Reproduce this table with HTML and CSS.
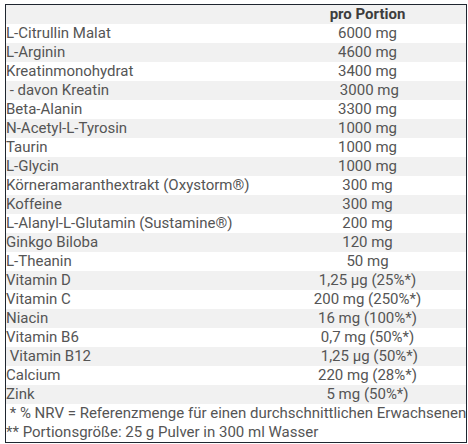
FILE: index.html
```html
<!DOCTYPE html>
<html lang="de">
<head>
<meta charset="utf-8">
<link rel="stylesheet" href="styles.css">
</head>
<body>
<div class="box">
<table class="nt">
<thead>
<tr><th class="name"></th><th class="val">pro Portion</th></tr>
</thead>
<tbody>
<tr><td class="name">L-Citrullin Malat</td><td class="val">6000 mg</td></tr>
<tr><td class="name">L-Arginin</td><td class="val">4600 mg</td></tr>
<tr><td class="name">Kreatinmonohydrat</td><td class="val">3400 mg</td></tr>
<tr><td class="name">&nbsp;- davon Kreatin</td><td class="val">&nbsp;3000 mg</td></tr>
<tr><td class="name">Beta-Alanin</td><td class="val">3300 mg</td></tr>
<tr><td class="name">N-Acetyl-L-Tyrosin</td><td class="val">1000 mg</td></tr>
<tr><td class="name">Taurin</td><td class="val">1000 mg</td></tr>
<tr><td class="name">L-Glycin</td><td class="val">1000 mg</td></tr>
<tr><td class="name">Körneramaranthextrakt (Oxystorm®)</td><td class="val">300 mg</td></tr>
<tr><td class="name">Koffeine</td><td class="val">300 mg</td></tr>
<tr><td class="name">L-Alanyl-L-Glutamin (Sustamine®)</td><td class="val">200 mg</td></tr>
<tr><td class="name">Ginkgo Biloba</td><td class="val">120 mg</td></tr>
<tr><td class="name">L-Theanin</td><td class="val">50 mg</td></tr>
<tr><td class="name">Vitamin D</td><td class="val">1,25 µg (25%*)</td></tr>
<tr><td class="name">Vitamin C</td><td class="val">200 mg (250%*)</td></tr>
<tr><td class="name">Niacin</td><td class="val">16 mg (100%*)</td></tr>
<tr><td class="name">Vitamin B6</td><td class="val">0,7 mg (50%*)</td></tr>
<tr><td class="name">&nbsp;Vitamin B12</td><td class="val">&nbsp;1,25 µg (50%*)</td></tr>
<tr><td class="name">Calcium</td><td class="val">220 mg (28%*)</td></tr>
<tr><td class="name">Zink</td><td class="val">5 mg (50%*)</td></tr>
<tr class="foot"><td colspan="2">&nbsp;* % NRV = Referenzmenge für einen durchschnittlichen Erwachsenen</td></tr>
<tr class="foot"><td colspan="2">** Portionsgröße: 25 g Pulver in 300 ml Wasser</td></tr>
</tbody>
</table>
</div>
</body>
</html>
```

FILE: styles.css
```css
html, body {
  margin: 0;
  padding: 0;
  background: #ffffff;
}
body {
  padding: 4px 0 0 5px;
  font-family: Roboto, "Liberation Sans", sans-serif;
  font-size: 15px;
  color: #555555;
}
.box {
  width: 460px;
  border: 1px solid #1f2630;
  overflow: visible;
}
.nt {
  width: 100%;
  border-collapse: collapse;
  table-layout: fixed;
}
.nt th, .nt td {
  padding: 0;
  height: 19px;
  line-height: 19px;
  white-space: nowrap;
  font-weight: 400;
}
.nt th.name, .nt td.name {
  width: 263px;
  text-align: left;
}
.nt th.val, .nt td.val {
  text-align: center;
}
.nt thead tr {
  background: #f1f1f1;
}
.nt thead th.val {
  font-weight: 700;
  color: #3d3d3d;
}
.nt tbody tr:nth-child(even) {
  background: #f1f1f1;
}
.nt tbody tr.foot {
  background: #ffffff;
}
.nt tr.foot td {
  text-align: left;
}
```
